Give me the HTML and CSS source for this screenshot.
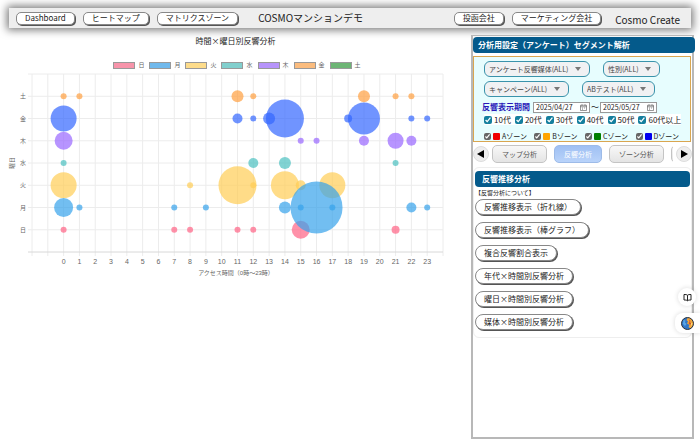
FILE: index.html
```html
<!DOCTYPE html>
<html lang="ja">
<head>
    <meta charset="UTF-8">
    <meta name="viewport" content="width=device-width, initial-scale=1.0">
    <title>COSMOマンションデモ</title>
    <link rel="stylesheet" href="styles.css">
</head>
<body>
<header class="header">
    <nav class="header-nav">
        <button type="button" class="button1">Dashboard</button>
        <button type="button" class="button1">ヒートマップ</button>
        <button type="button" class="button1">マトリクスゾーン</button>
    </nav>
    <h1 class="site-name">COSMOマンションデモ</h1>
    <div class="header-right">
        <button type="button" class="button1">投函会社</button>
        <button type="button" class="button1">マーケティング会社</button>
    </div>
    <span class="company">Cosmo Create</span>
</header>

<main class="main">
    <section class="chart">
        <h2 class="chart-title">時間×曜日別反響分析</h2>
        <ul class="legend">
            <li><span class="box sun"></span>日</li>
            <li><span class="box mon"></span>月</li>
            <li><span class="box tue"></span>火</li>
            <li><span class="box wed"></span>水</li>
            <li><span class="box thu"></span>木</li>
            <li><span class="box fri"></span>金</li>
            <li><span class="box sat"></span>土</li>
        </ul>
        <svg id="plot" class="plot" viewBox="0 0 471 210" role="img" aria-label="時間×曜日別反響分析"></svg>
    </section>

    <aside class="panel">
        <h2 class="bar bar-top">分析用設定（アンケート）セグメント解析</h2>
        <form class="settings">
            <div class="row wide">
                <div class="pick"><select aria-label="アンケート反響媒体"><option>アンケート反響媒体(ALL)</option></select></div>
                <div class="pick"><select aria-label="性別"><option>性別(ALL)</option></select></div>
            </div>
            <div class="row wide">
                <div class="pick"><select aria-label="キャンペーン"><option>キャンペーン(ALL)</option></select></div>
                <div class="pick"><select aria-label="ABテスト"><option>ABテスト(ALL)</option></select></div>
            </div>
            <div class="row period">
                <label for="from">反響表示期間</label>
                <span class="date">
                    <input type="text" id="from" value="2025/04/27">
                    <svg viewBox="0 0 14 14"><path d="M1 2.5h12v10.500H1zM1 5.500h12M4 .5v3M10 .5v3M4 8h2M8 8h2M4 10.500h2" /></svg>
                </span>
                <span>～</span>
                <span class="date">
                    <input type="text" id="to" value="2025/05/27" aria-label="終了日">
                    <svg viewBox="0 0 14 14"><path d="M1 2.5h12v10.500H1zM1 5.500h12M4 .5v3M10 .5v3M4 8h2M8 8h2M4 10.500h2" /></svg>
                </span>
            </div>
            <div class="row ages">
                <label><input type="checkbox" checked>10代</label>
                <label><input type="checkbox" checked>20代</label>
                <label><input type="checkbox" checked>30代</label>
                <label><input type="checkbox" checked>40代</label>
                <label><input type="checkbox" checked>50代</label>
                <label><input type="checkbox" checked>60代以上</label>
            </div>
            <div class="row zones">
                <label><input type="checkbox" checked><span class="zone zone-a"></span>Aゾーン</label>
                <label><input type="checkbox" checked><span class="zone zone-b"></span>Bゾーン</label>
                <label><input type="checkbox" checked><span class="zone zone-c"></span>Cゾーン</label>
                <label><input type="checkbox" checked><span class="zone zone-d"></span>Dゾーン</label>
            </div>
        </form>

        <div class="tabs">
            <button type="button" class="arrow" aria-label="前へ"><svg viewBox="0 0 8 8"><path d="M7 0v8L0 4z" /></svg></button>
            <div class="tab-list">
                <button type="button" class="tab">マップ分析</button>
                <button type="button" class="tab active">反響分析</button>
                <button type="button" class="tab">ゾーン分析</button>
                <button type="button" class="tab" aria-label="次の分析"></button>
            </div>
            <button type="button" class="arrow" aria-label="次へ"><svg viewBox="0 0 8 8"><path d="M1 0v8l7-4z" /></svg></button>
        </div>

        <div class="card">
            <h2 class="bar">反響推移分析</h2>
            <a class="about" href="#about">【反響分析について】</a>
            <div class="menu">
                <button type="button" class="button1">反響推移表示（折れ線）</button>
                <button type="button" class="button1">反響推移表示（棒グラフ）</button>
                <button type="button" class="button1">複合反響割合表示</button>
                <button type="button" class="button1">年代×時間別反響分析</button>
                <button type="button" class="button1">曜日×時間別反響分析</button>
                <button type="button" class="button1">媒体×時間別反響分析</button>
            </div>
        </div>
    </aside>
</main>

<!-- フローティングボタン -->
<div class="floating">
    <button type="button" class="float-book" aria-label="ガイド">
        <svg viewBox="0 0 18 18"><path d="M9 4.500C7.500 3 5 3 2 3v11c3 0 5.500 0 7 1.500 1.500-1.500 4-1.500 7-1.500V3c-3 0-5.500 0-7 1.500zM9 4.500v11" /></svg>
    </button>
    <button type="button" class="float-globe" aria-label="言語">
        <svg viewBox="0 0 26 26">
            <circle cx="13" cy="13" r="12" fill="#2f76c8" />
            <path d="M14 1a12 12 0 0 1 5 22l-4-3 2-4-5-3 2-4-3-3z" fill="#f0a63a" />
            <path d="M16 5l3 3-2 3 4 1-3 4-3-4 2-3z" fill="#c94f32" />
            <path d="M5 6l4 1-1 4 3 3-3 4-4-4z" fill="#58a5e6" />
            <path d="M20 11l3 3-3 4z" fill="#ffe07a" />
            <circle cx="13" cy="13" r="12" fill="none" stroke="#2b3038" stroke-width="2" />
        </svg>
    </button>
</div>
<script src="chart.js"></script>
</body>
</html>
```

FILE: styles.css
```css
* {
    box-sizing: border-box;
}

body {
    margin: 0;
    font-family: "Noto Sans CJK JP", "Noto Sans", sans-serif;
    font-size: 8px;
    line-height: 12px;
    color: #222;
    background: #fff;
    min-height: 100vh;
    display: flex;
    flex-direction: column;
}

h1, h2, ul {
    margin: 0;
    padding: 0;
}

button, input, select {
    font-family: inherit;
    color: inherit;
    margin: 0;
}

/* ヘッダー */
.header {
    display: flex;
    align-items: center;
    height: 20px;
    margin: 8px 9px 7px;
    padding: 0 11px 0 7px;
    background: #eee;
    box-shadow: 0 0 8px 2px #777;
}

.header-nav, .header-right {
    display: flex;
    gap: 8px;
}

.header-right {
    margin-left: auto;
}

.site-name {
    margin-left: 20px;
    font-size: 10px;
    font-weight: normal;
}

.company {
    margin-left: 14px;
    padding-top: 4px;
    font-size: 10px;
}

.button1 {
    height: 13px;
    padding: 0 8px;
    border: 1px solid #888;
    border-radius: 5px;
    background: #fff;
    box-shadow: 1px 1px 0 #555;
    font-size: 8px;
    line-height: 10px;
    white-space: nowrap;
    cursor: pointer;
}

.main {
    flex: 1;
    display: grid;
    grid-template-columns: minmax(0, 1fr) 223px;
    margin: 0 6px 6px 0;
}

/* グラフ */
.chart-title {
    font-size: 8px;
    font-weight: normal;
    text-align: center;
}

.legend {
    display: flex;
    justify-content: center;
    gap: 5px;
    margin-top: 13px;
    padding-left: 3px;
    list-style: none;
    font-size: 6px;
    line-height: 10px;
    color: #666;
}

.legend li {
    display: flex;
    align-items: center;
    gap: 3px;
}

.box {
    width: 22px;
    height: 7px;
    border: 1px solid #999;
}

.sun { background: #f794aa; }
.mon { background: #70b9ec; }
.tue { background: #fddc8b; }
.wed { background: #81cfcd; }
.thu { background: #b794fb; }
.fri { background: #fbbc7e; }
.sat { background: #6db575; }

.plot {
    display: block;
    width: 100%;
}

.plot text {
    font-family: "Liberation Sans", "Noto Sans CJK JP", sans-serif;
    font-size: 6px;
    fill: #666;
    text-anchor: middle;
}

.plot .hour {
    font-size: 7px;
}

.grid-line {
    stroke: #ececec;
}

.axis-line {
    stroke: #d8d8d8;
}

/* 右パネル */
.panel {
    border: 2px solid #b8b8b8;
    border-top-width: 1px;
}

.bar {
    height: 16px;
    padding: 0 7px;
    border-radius: 4px;
    background: #045a8b;
    color: #fff;
    font-size: 8px;
    line-height: 16px;
}

.bar-top {
    margin: 1px -3px 3px 0;
    padding: 0 5px;
}

.settings {
    height: 86px;
    margin: 0 1px 0 0;
    padding: 4px 2px 0 8px;
    border: 1px solid #d9a650;
    background: #e7fdfe;
}

.row {
    display: flex;
    align-items: center;
}

.wide {
    gap: 13px;
    margin: 0 0 4px 2px;
}

.pick {
    position: relative;
}

.pick select {
    appearance: none;
    display: block;
    height: 16px;
    padding: 0 20px 0 4px;
    border: 1px solid #3a93ab;
    border-radius: 6px;
    background: #f0f1f3;
    color: #444;
    font-size: 7px;
}

/* 下向き矢印 */
.pick::after {
    content: "";
    position: absolute;
    right: 9px;
    top: 6px;
    border: 3px solid transparent;
    border-top: 4px solid #777;
    border-bottom: 0;
    pointer-events: none;
}

.period {
    gap: 1px;
}

.period label {
    margin-right: 2px;
    color: #2818b8;
    font-weight: bold;
}

.date {
    display: flex;
    align-items: center;
    width: 57px;
    height: 11px;
    padding: 0 2px;
    border: 1px solid #999;
    background: #fff;
}

.date input {
    flex: 1;
    min-width: 0;
    padding: 0;
    border: 0;
    background: none;
    font-size: 7px;
    line-height: 9px;
}

.date svg {
    width: 7px;
    height: 7px;
    fill: none;
    stroke: #333;
}

.row label {
    display: flex;
    align-items: center;
    white-space: nowrap;
}

.ages {
    width: max-content;
    gap: 4px;
    margin: 1px 0 0 2px;
    line-height: 11px;
    background: #fff;
}

.ages label {
    gap: 2px;
}

.row input[type="checkbox"] {
    width: 8px;
    height: 8px;
    accent-color: #147f9e;
}

.zones {
    justify-content: space-between;
    margin: 5px 9px 0 2px;
    font-size: 7px;
}

.zones label {
    gap: 2px;
}

.row.zones input[type="checkbox"] {
    width: 7px;
    height: 7px;
    accent-color: #666;
}

.zone {
    width: 7px;
    height: 7px;
    border-radius: 1px;
}

.zone-a { background: #f00000; }
.zone-b { background: #ffa500; }
.zone-c { background: #008000; }
.zone-d { background: #0000f0; }

/* タブ */
.tabs {
    display: flex;
    align-items: center;
    gap: 3px;
    margin-top: 3px;
}

.arrow {
    flex: none;
    width: 16px;
    height: 16px;
    padding: 3px;
    border: 1px solid #ddd;
    border-radius: 50%;
    background: #eee;
}

.arrow svg {
    display: block;
    width: 8px;
    height: 8px;
}

.tab-list {
    flex: 1;
    display: flex;
    gap: 7px;
    overflow: hidden;
}

.tab {
    flex: none;
    height: 18px;
    padding: 0 9px;
    border: 1px solid #c4c4c4;
    border-radius: 5px;
    background: linear-gradient(#f8f8f8, #e4e4e4);
    color: #555;
    font-size: 7px;
}

.tab.active {
    border-color: #9dbbe8;
    background: linear-gradient(#9fc0f3, #b9d3fa);
    color: #fff;
}

.card {
    margin-top: 4px;
    padding: 3px 1px 7px;
    border: 1px solid #eee;
    border-radius: 6px;
}

.about {
    display: block;
    color: #222;
    font-size: 6px;
    line-height: 12px;
    text-decoration: none;
}

.menu {
    display: flex;
    flex-direction: column;
    align-items: flex-start;
    gap: 7px;
}

.menu .button1 {
    height: 16px;
    border-radius: 8px;
}

/* 画面右端に固定 */
.floating {
    position: fixed;
    right: 0;
    top: 288px;
    display: flex;
    flex-direction: column;
    align-items: flex-end;
    gap: 7px;
}

.floating button {
    display: flex;
    align-items: center;
    justify-content: center;
    padding: 0;
    border: 0;
    background: #fff;
    box-shadow: 0 0 5px rgba(0, 0, 0, 0.15);
}

.floating .float-book {
    width: 18px;
    height: 18px;
    margin-right: 4px;
    border-radius: 50%;
}

.float-book svg {
    width: 9px;
    height: 9px;
    fill: none;
    stroke: #222;
    stroke-width: 2;
}

.floating .float-globe {
    width: 25px;
    height: 20px;
    border-radius: 8px 0 0 8px;
}

.float-globe svg {
    width: 13px;
    height: 13px;
}
```

FILE: chart.js
```javascript
// 曜日ごとのデータ: [時間, 半径]
const days = [
    { name: '日', color: '#ff6384', data: [[0, 3], [7, 3], [8, 3], [11, 3], [12, 3], [15, 9], [21, 4]] },
    { name: '月', color: '#36a2eb', data: [[0, 9.5], [1, 3], [7, 3], [9, 3], [14, 6], [15, 3], [16, 26], [17, 3], [22, 5], [23, 3]] },
    { name: '火', color: '#ffcd56', data: [[0, 13], [8, 3], [11, 19], [12, 3], [14, 14], [15, 5], [17, 13]] },
    { name: '水', color: '#4bc0c0', data: [[0, 3], [12, 5], [14, 6], [21, 3]] },
    { name: '木', color: '#9966ff', data: [[0, 9], [15, 3], [16, 3], [19, 5], [21, 8], [22, 5]] },
    { name: '金', color: '#3366ff', data: [[0, 13], [11, 5], [12, 3], [13, 6], [14, 19], [18, 4], [19, 16], [22, 3], [23, 3]] },
    { name: '土', color: '#ff9f40', data: [[0, 3], [1, 3], [11, 6], [12, 3], [19, 6], [21, 3], [22, 3]] }
];

// 描画順（月曜日が一番上）
const order = [6, 5, 4, 3, 2, 0, 1];

const plot = document.getElementById('plot');
const left = 32, right = 443, top1 = 4, bottom = 182;
const stepX = (right - left) / 26;
const stepY = (bottom - top1) / 8;

function add(tag, attrs, text) {
    const el = document.createElementNS('http://www.w3.org/2000/svg', tag);
    for (const key in attrs) el.setAttribute(key, attrs[key]);
    if (text !== undefined) el.textContent = text;
    plot.appendChild(el);
}

function posX(hour) {
    return left + (hour + 2) * stepX;
}

// 縦の目盛線と時間
for (let h = -2; h <= 24; h++) {
    add('line', { class: 'grid-line', x1: posX(h), x2: posX(h), y1: top1, y2: bottom + 4 });
    if (h >= 0 && h < 24) add('text', { class: 'hour', x: posX(h), y: 194 }, h);
}

// 横の目盛線
for (let i = 0; i <= 8; i++) {
    const y = bottom - i * stepY;
    add('line', { class: i === 0 ? 'axis-line' : 'grid-line', x1: left - 4, x2: right, y1: y, y2: y });
}

days.forEach((day, i) => add('text', { x: 23, y: bottom - (i + 1) * stepY + 2 }, day.name));

order.forEach(i => {
    days[i].data.forEach(([hour, r]) => {
        add('circle', { cx: posX(hour), cy: bottom - (i + 1) * stepY, r: r, fill: days[i].color, 'fill-opacity': 0.7 });
    });
});

add('text', { x: 236, y: 205 }, 'アクセス時間（0時～23時）');
add('text', { x: 0, y: 0, transform: 'translate(14 93) rotate(-90)' }, '曜日');
```
